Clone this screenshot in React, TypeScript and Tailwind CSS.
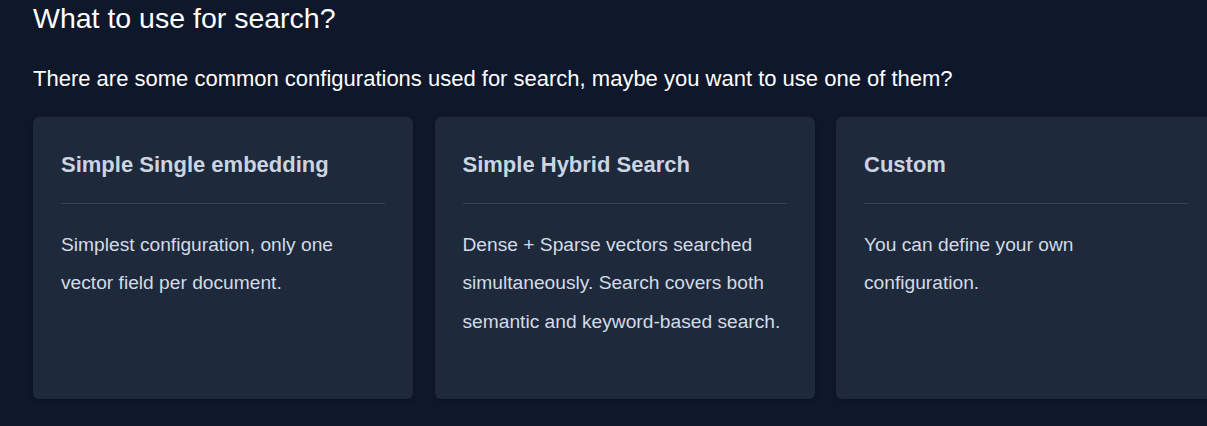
const options = [
  {
    title: 'Simple Single embedding',
    body: 'Simplest configuration, only one vector field per document.',
  },
  {
    title: 'Simple Hybrid Search',
    body: 'Dense + Sparse vectors searched simultaneously. Search covers both semantic and keyword-based search.',
  },
  {
    title: 'Custom',
    body: 'You can define your own configuration.',
  },
]

function OptionCard({ title, body }: { title: string; body: string }) {
  return (
    <div className="w-[380px] shrink-0 rounded-md bg-[#1e293b] px-[28px] pt-[28px] pb-[58px] shadow-md">
      <h3 className="text-[22px] font-bold leading-[39px] text-[#cbd5e1]">{title}</h3>
      <hr className="mt-[19px] border-0 border-t border-[#334155]" />
      <p className="mt-[22px] text-[19.2px] leading-[38.4px] text-[#d3dbe6]">{body}</p>
    </div>
  )
}

export default function App() {
  return (
    <div
      className="min-h-screen w-full overflow-hidden bg-[#0f172a] pl-[33px] pt-[2px] text-white"
      style={{ fontFamily: '"Liberation Sans", Arial, sans-serif' }}
    >
      <h2 className="text-[28.5px] leading-[32px]">What to use for search?</h2>
      <p className="mt-[32px] text-[22px] leading-[26px]">
        There are some common configurations used for search, maybe you want to use one of them?
      </p>
      <div className="mt-[25px] flex gap-[21.5px]">
        {options.map((o) => (
          <OptionCard key={o.title} title={o.title} body={o.body} />
        ))}
      </div>
    </div>
  )
}
